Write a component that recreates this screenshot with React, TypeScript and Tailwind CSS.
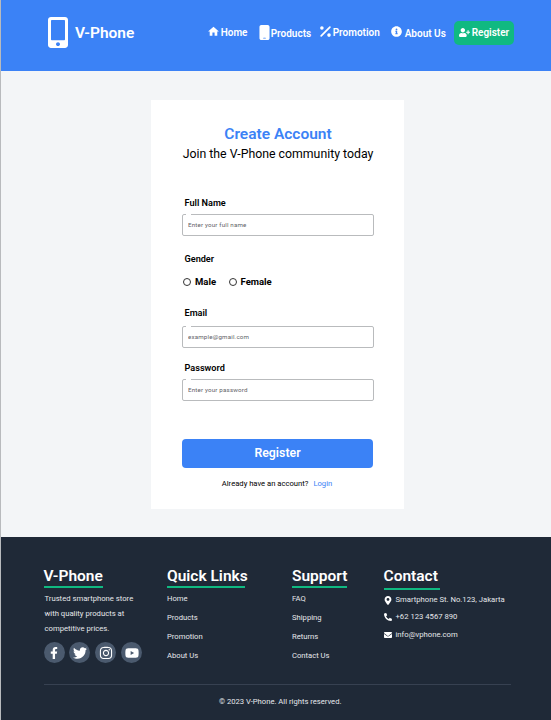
import React from "react";
import { FaMobileAlt, FaInfoCircle, FaUserPlus, FaFacebookF, FaTwitter, FaInstagram, FaYoutube, FaMapMarkerAlt, FaPhoneAlt, FaEnvelope } from "react-icons/fa";
import { FaMobile } from "react-icons/fa6";
import { MdHome } from "react-icons/md";

function PercentIcon() {
  return (
    <svg viewBox="0 0 11 11" className="mt-[26px] h-[11px] w-[11px] shrink-0" fill="white">
      <path d="M1.2 9.9 L9.9 1.1" stroke="white" strokeWidth="1.7" strokeLinecap="round" />
      <circle cx="1.9" cy="2" r="1.8" />
      <circle cx="9" cy="9.1" r="1.8" />
    </svg>
  );
}

function Header() {
  return (
    <header className="flex h-[70.5px] items-start bg-[#3b82f6] pl-[47px] text-white">
      <FaMobileAlt className="mt-[17px] h-[31px] w-[20px] shrink-0" preserveAspectRatio="none" />
      <span className="mt-[24px] ml-[7px] w-[131.7px] shrink-0 text-[15.5px] leading-[18px] font-semibold">V-Phone</span>
      <nav className="flex items-start text-[10px] leading-[12px] font-semibold">
        <a className="flex w-[52px] items-start">
          <MdHome className="mt-[25px] h-[13px] w-[13px] shrink-0" />
          <span className="mt-[27px] ml-[1px]">Home</span>
        </a>
        <a className="flex w-[61px] items-start">
          <FaMobile className="mt-[25px] h-[15px] w-[11px] shrink-0" preserveAspectRatio="none" />
          <span className="mt-[28px] ml-[1px]">Products</span>
        </a>
        <a className="flex w-[71px] items-start">
          <PercentIcon />
          <span className="mt-[27px] ml-[2px]">Promotion</span>
        </a>
        <a className="flex w-[63px] items-start">
          <FaInfoCircle className="mt-[26px] h-[11px] w-[11px] shrink-0" />
          <span className="mt-[28px] ml-[3px] whitespace-nowrap">About Us</span>
        </a>
        <a className="mt-[21px] flex h-[24px] w-[60px] items-start rounded-[5px] bg-[#10b981] pl-[5px]">
          <FaUserPlus className="mt-[7px] h-[9px] w-[11px] shrink-0" />
          <span className="mt-[6px] ml-[2px]">Register</span>
        </a>
      </nav>
    </header>
  );
}

function Field({ placeholder, type = "text" }: { placeholder: string; type?: string }) {
  return (
    <div className="relative h-[22px] w-[191.5px] rounded-[2px] border border-[#b9bbbd]">
      <span className="absolute -top-px left-[3px] h-px w-[5px] bg-white" />
      <input
        type={type === "password" ? "text" : type}
        placeholder={placeholder}
        className="block h-[19.5px] w-full bg-transparent pl-[5px] text-[6.2px] tracking-[0.18px] outline-none placeholder:text-[#5f6368]"
      />
    </div>
  );
}

function Radio({ label }: { label: string }) {
  return (
    <label className="flex items-center gap-[4px]">
      <span className="h-[8px] w-[8px] rounded-full border border-[#333333]" />
      {label}
    </label>
  );
}

const labelStyle = "pl-[2.5px] text-[9.15px] leading-[12px] font-semibold";

function Card() {
  return (
    <main className="flex h-[466.5px] justify-center bg-[#f3f5f7] pt-[29px] pl-[3px]">
      <form className="flex h-[409px] w-[253px] flex-col bg-white pl-[31px] text-black">
        <h1 className="mt-[24.4px] w-[192px] text-center text-[15.5px] leading-[20px] font-semibold text-[#3b82f6]">Create Account</h1>
        <p className="mt-[2.2px] w-[192px] text-center text-[12.3px] leading-[16px] whitespace-nowrap">Join the V-Phone community today</p>
        <label className={`mt-[35px] mb-[5.4px] ${labelStyle}`}>Full Name</label>
        <Field placeholder="Enter your full name" />
        <span className={`mt-[17px] ${labelStyle}`}>Gender</span>
        <div className="mt-[11px] flex items-center gap-[12.5px] pl-px text-[9.5px] leading-[12px] font-bold">
          <Radio label="Male" />
          <Radio label="Female" />
        </div>
        <label className={`mt-[18.5px] mb-[7px] ${labelStyle}`}>Email</label>
        <Field placeholder="example@gmail.com" />
        <label className={`mt-[14.5px] mb-[5px] ${labelStyle}`}>Password</label>
        <Field placeholder="Enter your password" type="password" />
        <button type="button" className="mt-[37.6px] h-[28.5px] w-[191px] rounded-[4px] bg-[#3b82f6] text-[12.3px] leading-[28px] font-semibold text-white">Register</button>
        <p className="mt-[10.1px] w-[190px] text-center text-[7.65px] leading-[12px]">
          Already have an account?<a className="ml-[5px] text-[#3b82f6]">Login</a>
        </p>
      </form>
    </main>
  );
}

function Links({ title, items, width, bar }: { title: string; items: string[]; width: string; bar: string }) {
  return (
    <div className={`shrink-0 ${width}`}>
      <h2 className="text-[15.5px] leading-[20px] font-semibold whitespace-nowrap">{title}</h2>
      <div className={`h-[2px] bg-[#10b981] ${bar}`} />
      <ul className="mt-[4.6px] flex flex-col gap-[7.2px] text-[7.65px] leading-[12px] text-[#e5e7eb]">
        {items.map((t) => <li key={t}>{t}</li>)}
      </ul>
    </div>
  );
}

function Footer() {
  const social = [FaFacebookF, FaTwitter, FaInstagram, FaYoutube];
  return (
    <footer className="h-[183px] bg-[#1f2937] pt-[29px] pl-[42.5px] text-white">
      <div className="flex h-[117.5px] items-start">
        <div className="w-[123.5px] shrink-0">
          <h2 className="text-[15.5px] leading-[20px] font-semibold">V-Phone</h2>
          <div className="h-[2px] w-[59px] bg-[#10b981]" />
          <p className="mt-[2.5px] pl-px text-[7.7px] leading-[15.4px] whitespace-nowrap text-[#e5e7eb]">
            Trusted smartphone store<br />with quality products at<br />competitive prices.
          </p>
          <div className="mt-[5.5px] flex gap-[4.9px]">
            {social.map((Icon, i) => (
              <span key={i} className="flex h-[21px] w-[21px] items-center justify-center rounded-full bg-[#4b5a6e]">
                <Icon className={i === 0 ? "h-[12px] w-[12px]" : "h-[14px] w-[14px]"} />
              </span>
            ))}
          </div>
        </div>
        <Links title="Quick Links" items={["Home", "Products", "Promotion", "About Us"]} width="w-[125px]" bar="w-[78px]" />
        <Links title="Support" items={["FAQ", "Shipping", "Returns", "Contact Us"]} width="w-[91.5px]" bar="w-[55px]" />
        <div className="shrink-0">
          <h2 className="text-[15.5px] leading-[20px] font-semibold">Contact</h2>
          <div className="mt-[2px] h-[2px] w-[56px] bg-[#10b981]" />
          <ul className="mt-[4px] text-[7.7px] leading-[12px] whitespace-nowrap text-[#e5e7eb]">
            <li className="flex items-center gap-[4px]"><FaMapMarkerAlt className="h-[9px] w-[8px] text-white" />Smartphone St. No.123, Jakarta</li>
            <li className="mt-[5px] flex items-center gap-[4px]"><FaPhoneAlt className="h-[8px] w-[8px] text-white" />+62 123 4567 890</li>
            <li className="mt-[6px] flex items-center gap-[4px]"><FaEnvelope className="h-[8px] w-[8px] text-white" />info@vphone.com</li>
          </ul>
        </div>
      </div>
      <div className="w-[467.5px] border-t border-[#374151] pt-[11px] text-center text-[7.65px] leading-[12px] text-[#e5e7eb]">
        <span className="pl-[6px]">© 2023 V-Phone. All rights reserved.</span>
      </div>
    </footer>
  );
}

export default function App() {
  return (
    <div className="h-[720px] w-[551px] overflow-hidden border-l border-[#b8babd] font-[Roboto,sans-serif]">
      <Header />
      <Card />
      <Footer />
    </div>
  );
}
